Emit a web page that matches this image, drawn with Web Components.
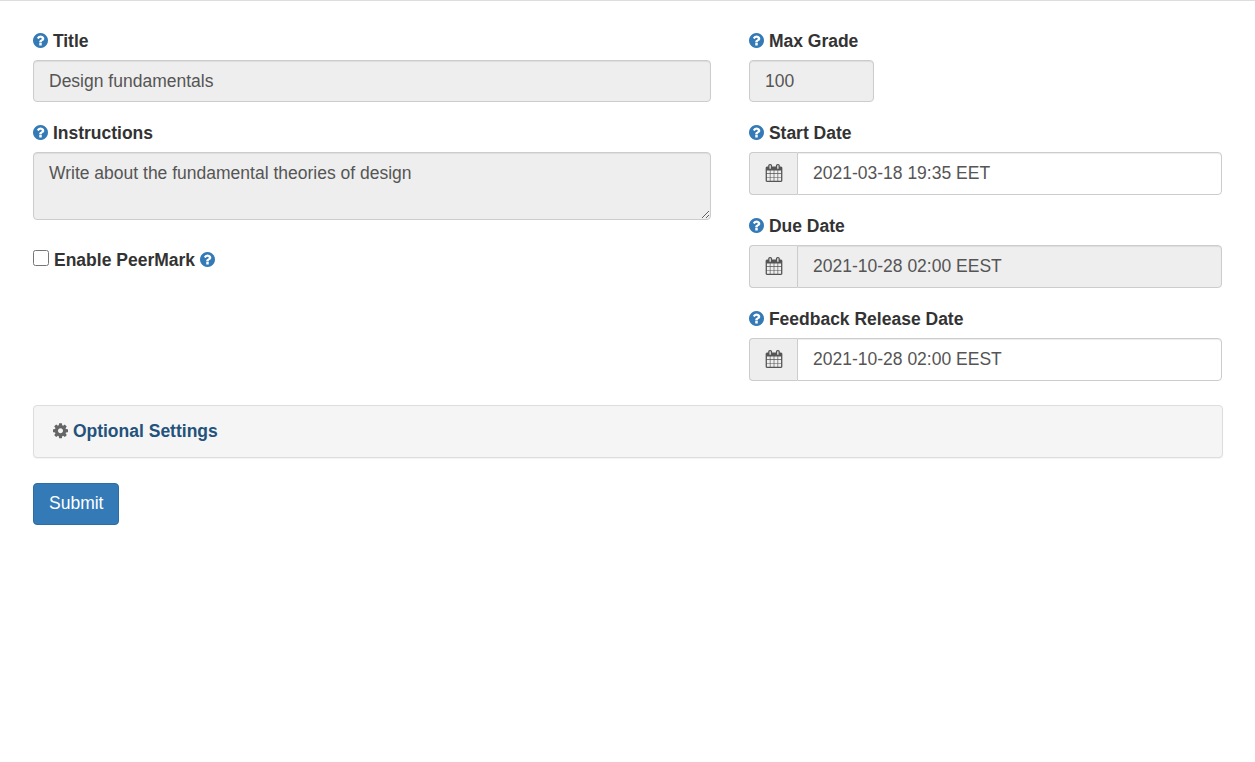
<!DOCTYPE html>
<html lang="en">
<head>
<meta charset="utf-8">
<title>Assignment settings</title>
<style>
  html, body { margin: 0; background: #fff; }
  body {
    font: 17.5px/25px "Liberation Sans", Arial, sans-serif;
    color: #333;
    border-top: 1px solid #ddd;
  }
</style>
</head>
<body>
<template id="help-tpl">
  <style>
    :host { display: inline; color: #337ab7; }
    svg { width: 15px; height: 15px; vertical-align: -1px; fill: currentColor; }
  </style>
  <svg viewBox="128 128 1536 1536" aria-hidden="true"><path d="M1024 1376v-192q0-14-9-23t-23-9h-192q-14 0-23 9t-9 23v192q0 14 9 23t23 9h192q14 0 23-9t9-23zm256-672q0-88-55.5-163t-138.5-116-170-41q-243 0-371 213-15 24 8 42l132 100q7 6 19 6 16 0 25-12 53-68 86-92 34-24 86-24 48 0 85.5 26t37.5 59q0 38-20 61t-68 45q-63 28-115.5 86.5t-52.5 125.5v36q0 14 9 23t23 9h192q14 0 23-9t9-23q0-19 21.5-49.5t54.5-49.5q32-18 49-28.5t46-35 44.5-48 28-60.5 12.5-81zm384 192q0 209-103 385.5t-279.5 279.5-385.5 103-385.5-103-279.5-279.5-103-385.5 103-385.5 279.5-279.5 385.5-103 385.5 103 279.5 279.5 103 385.5z"/></svg>
</template>

<template id="field-tpl">
  <style>
    :host { display: block; margin-bottom: 19px; }
    label { display: block; font-weight: 700; margin-bottom: 6px; }
  </style>
  <label><help-icon></help-icon> <slot name="label"></slot></label>
  <slot></slot>
</template>

<template id="box-tpl">
  <style>
    :host { display: block; box-sizing: border-box; color: #555; }
    .box {
      box-sizing: border-box;
      height: 42px;
      padding: 8px 15px 7px;
      border: 1px solid #ccc;
      border-radius: 4px;
      background: #fff;
      box-shadow: inset 0 1px 1px rgba(0, 0, 0, .075);
      white-space: nowrap;
    }
    :host([disabled]) .box { background: #eee; }
    :host([multiline]) .box { height: 68px; resize: vertical; overflow: auto; white-space: normal; }
    :host([short]) { width: 125px; }
  </style>
  <div class="box" role="textbox"><slot></slot></div>
</template>

<template id="date-tpl">
  <style>
    :host { display: flex; height: 43px; color: #555; }
    .addon {
      box-sizing: border-box;
      flex: 0 0 48px;
      display: flex;
      align-items: center;
      justify-content: center;
      background: #eee;
      border: 1px solid #ccc;
      border-right: 0;
      border-radius: 4px 0 0 4px;
    }
    svg { width: 18px; height: 18px; margin-bottom: 2px; fill: #555; }
    .box {
      box-sizing: border-box;
      flex: 1;
      padding: 8px 15px;
      background: #fff;
      border: 1px solid #ccc;
      border-radius: 0 4px 4px 0;
      box-shadow: inset 0 1px 1px rgba(0, 0, 0, .075);
    }
    :host([disabled]) .box { background: #eee; }
  </style>
  <span class="addon"><svg viewBox="0 0 1792 1792" aria-hidden="true"><path d="M192 1664h288v-288h-288v288zm352 0h320v-288h-320v288zm-352-352h288v-320h-288v320zm352 0h320v-320h-320v320zm-352-384h288v-288h-288v288zm736 736h320v-288h-320v288zm-384-736h320v-288h-320v288zm768 736h288v-288h-288v288zm-384-352h320v-320h-320v320zm-352-864v-288q0-13-9.5-22.5t-22.5-9.5h-64q-13 0-22.5 9.5t-9.5 22.5v288q0 13 9.5 22.5t22.5 9.5h64q13 0 22.5-9.5t9.5-22.5zm736 864h288v-320h-288v320zm-384-384h320v-288h-320v288zm384 0h288v-288h-288v288zm32-480v-288q0-13-9.5-22.5t-22.5-9.5h-64q-13 0-22.5 9.5t-9.5 22.5v288q0 13 9.5 22.5t22.5 9.5h64q13 0 22.5-9.5t9.5-22.5zm384-64v1280q0 52-38 90t-90 38h-1408q-52 0-90-38t-38-90v-1280q0-52 38-90t90-38h128v-96q0-66 47-113t113-47h64q66 0 113 47t47 113v96h384v-96q0-66 47-113t113-47h64q66 0 113 47t47 113v96h128q52 0 90 38t38 90z"/></svg></span>
  <div class="box" role="textbox"><slot></slot></div>
</template>

<template id="check-tpl">
  <style>
    :host { display: block; margin-top: 27.5px; font-weight: 700; }
    label { display: flex; align-items: center; }
    input { width: 16px; height: 16px; margin: 0 5px 4px 0; }
    help-icon { margin-left: 5px; }
  </style>
  <label><input type="checkbox"><slot></slot><help-icon></help-icon></label>
</template>

<template id="panel-tpl">
  <style>
    :host {
      display: block;
      box-sizing: border-box;
      height: 53px;
      padding: 12.5px 18px 12.5px 19px;
      background: #f5f5f5;
      border: 1px solid #ddd;
      border-radius: 4px;
      box-shadow: 0 1px 1px rgba(0, 0, 0, .05);
      color: #23527c;
      font-weight: 700;
    }
    svg { width: 15px; height: 17.5px; vertical-align: -3px; fill: #666; }
  </style>
  <svg viewBox="128 0 1536 1792" aria-hidden="true"><path d="M1152 896q0-106-75-181t-181-75-181 75-75 181 75 181 181 75 181-75 75-181zm512-109v222q0 12-8 23t-20 13l-185 28q-19 54-39 91 35 50 107 138 10 12 10 25t-9 23q-27 37-99 108t-94 71q-12 0-26-9l-138-108q-44 23-91 38-16 136-29 186-7 28-36 28h-222q-14 0-24.5-8.5t-11.5-21.5l-28-184q-49-16-90-37l-141 107q-10 9-25 9-14 0-25-11-126-114-165-168-7-10-7-23 0-12 8-23 15-21 51-66.5t54-70.5q-27-50-41-99l-183-27q-13-2-21-12.5t-8-23.5v-222q0-12 8-23t19-13l186-28q14-46 39-92-40-57-107-138-10-12-10-24 0-10 9-23 26-36 98.5-107.5t94.5-71.5q13 0 26 10l138 107q44-23 91-38 16-136 29-186 7-28 36-28h222q14 0 24.5 8.5t11.5 21.5l28 184q49 16 90 37l142-107q9-9 24-9 13 0 25 10 129 119 165 170 7 8 7 22 0 12-8 23-15 21-51 66.5t-54 70.5q26 50 41 98l183 28q13 2 21 12.5t8 23.5z"/></svg>
  <slot></slot>
</template>

<template id="button-tpl">
  <style>
    :host { display: inline-block; }
    button {
      box-sizing: border-box;
      height: 42px;
      padding: 0 15px 2px;
      background: #337ab7;
      border: 1px solid #2e6da4;
      border-radius: 4px;
      color: #fff;
      font: inherit;
    }
  </style>
  <button type="submit"><slot></slot></button>
</template>

<template id="form-tpl">
  <style>
    :host { display: block; padding: 28px 33px 0; }
    .columns { display: grid; grid-template-columns: 678px 1fr; column-gap: 38px; }
    ::slotted(option-panel) { margin: 5px -1px 25px 0; }
  </style>
  <div class="columns">
    <div><slot name="left"></slot></div>
    <div><slot name="right"></slot></div>
  </div>
  <slot></slot>
</template>

<assignment-form>
  <div slot="left">
    <form-field><span slot="label">Title</span><text-box disabled>Design fundamentals</text-box></form-field>
    <form-field><span slot="label">Instructions</span><text-box disabled multiline>Write about the fundamental theories of design</text-box></form-field>
    <check-field>Enable PeerMark</check-field>
  </div>
  <div slot="right">
    <form-field><span slot="label">Max Grade</span><text-box disabled short>100</text-box></form-field>
    <form-field><span slot="label">Start Date</span><date-box>2021-03-18 19:35 EET</date-box></form-field>
    <form-field><span slot="label">Due Date</span><date-box disabled>2021-10-28 02:00 EEST</date-box></form-field>
    <form-field><span slot="label">Feedback Release Date</span><date-box>2021-10-28 02:00 EEST</date-box></form-field>
  </div>
  <option-panel>Optional Settings</option-panel>
  <submit-button>Submit</submit-button>
</assignment-form>

<script>
  // every element just clones its own template into an open shadow root
  function register(tag, tplId) {
    customElements.define(tag, class extends HTMLElement {
      constructor() {
        super();
        const tpl = document.getElementById(tplId);
        this.attachShadow({ mode: 'open' }).appendChild(tpl.content.cloneNode(true));
      }
    });
  }

  register('help-icon', 'help-tpl');
  register('form-field', 'field-tpl');
  register('text-box', 'box-tpl');
  register('date-box', 'date-tpl');
  register('check-field', 'check-tpl');
  register('option-panel', 'panel-tpl');
  register('submit-button', 'button-tpl');
  register('assignment-form', 'form-tpl');
</script>
</body>
</html>
